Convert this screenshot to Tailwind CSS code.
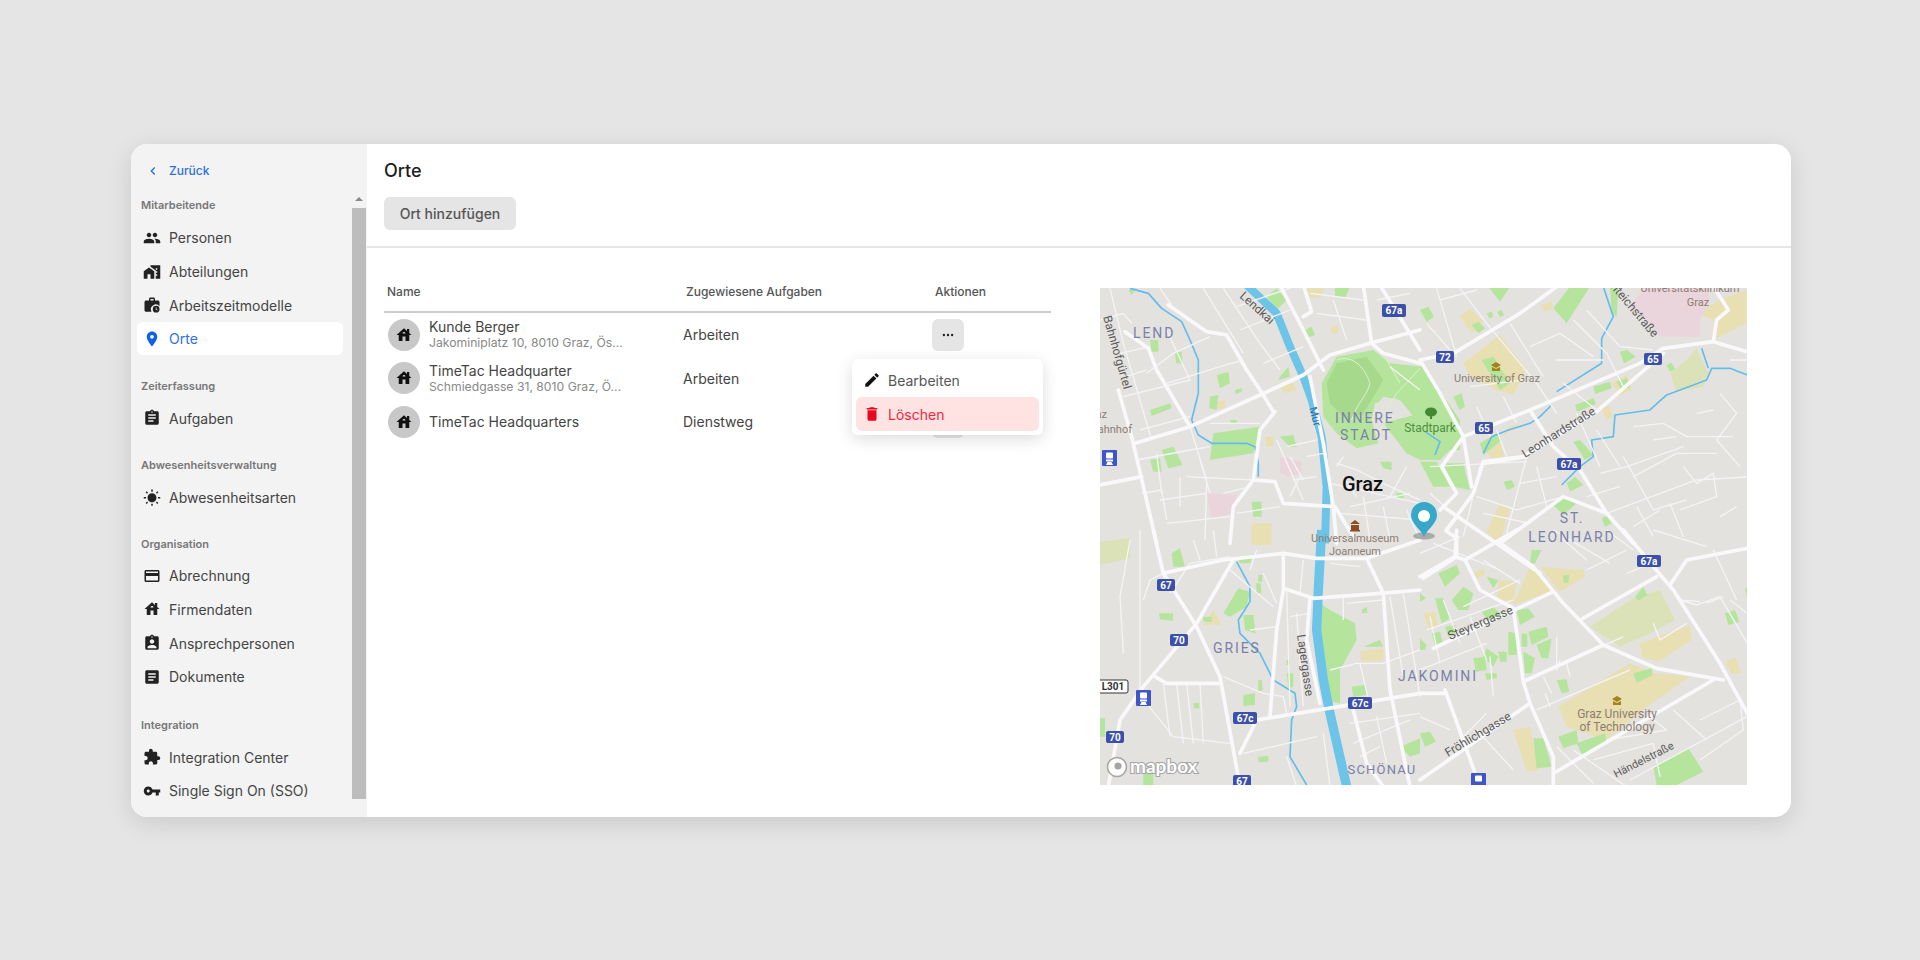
<!DOCTYPE html>
<html lang="de">
<head>
<meta charset="utf-8">
<title>Orte</title>
<script src="https://cdn.jsdelivr.net/npm/@tailwindcss/browser@4"></script>
</head>
<body class="m-0 h-[960px] w-[1920px] overflow-hidden bg-[#e5e5e5] font-['Inter',sans-serif]">
<div class="pl-[131px] pt-[144px]">
  <div class="relative flex h-[673px] w-[1660px] overflow-hidden rounded-[16px] bg-white shadow-[0_6px_24px_rgba(0,0,0,0.12)]">
    <aside class="relative h-full w-[236px] shrink-0 bg-[#f3f3f3] text-[14px] text-[#444]">
      <a class="mt-[10px] flex h-[34px] items-center gap-[8px] pl-[14px] text-[#2f6fe0]">
        <svg class="h-[16px] w-[16px]" viewBox="0 0 24 24" fill="#1f6fe5"><path d="M15.41 7.41L14 6l-6 6 6 6 1.41-1.41L10.83 12z"/></svg>
        <span class="text-[12px] font-medium">Zurück</span>
      </a>
      <div class="mt-[9px] pl-[10px] text-[11px] font-semibold leading-[16px] text-[#777]">Mitarbeitende</div>
      <nav class="mt-[8px]">
        <div class="flex h-[33.7px] items-center gap-[8px] pl-[12px]"><svg class="h-[18px] w-[18px]" viewBox="0 0 24 24" fill="#222"><path d="M16 11c1.66 0 2.99-1.34 2.99-3S17.66 5 16 5c-1.66 0-3 1.34-3 3s1.34 3 3 3zm-8 0c1.66 0 2.99-1.34 2.99-3S9.66 5 8 5C6.34 5 5 6.34 5 8s1.34 3 3 3zm0 2c-2.33 0-7 1.17-7 3.5V19h14v-2.5c0-2.33-4.67-3.5-7-3.5zm8 0c-.29 0-.62.02-.97.05 1.16.84 1.97 1.97 1.97 3.45V19h6v-2.5c0-2.33-4.67-3.5-7-3.5z"/></svg>Personen</div>
        <div class="flex h-[33.7px] items-center gap-[8px] pl-[12px]"><svg class="h-[18px] w-[18px]" viewBox="0 0 24 24" fill="#222"><path d="M1 11v10h5v-6h4v6h5V11L8 6z"/><path d="M10 3v1.97l7 5V11h2v2h-2v2h2v2h-2v4h6V3H10zm9 6h-2V7h2v2z"/></svg>Abteilungen</div>
        <div class="flex h-[33.7px] items-center gap-[8px] pl-[12px]"><svg class="h-[18px] w-[18px]" viewBox="0 0 24 24" fill="#222"><path d="M20 6h-4V4c0-1.1-.9-2-2-2h-4c-1.1 0-2 .9-2 2v2H4c-1.1 0-2 .9-2 2v11c0 1.1.9 2 2 2h7.4A6.5 6.5 0 0 1 22 13.6V8c0-1.1-.9-2-2-2zm-6 0h-4V4h4v2z"/><path d="M17.5 13a4.5 4.5 0 1 0 0 9 4.5 4.5 0 0 0 0-9zm1.6 6.4-2.1-1.3V15.2h1v2.4l1.6 1-.5.8z"/></svg>Arbeitszeitmodelle</div>
        <div class="ml-[6px] mr-[24px] flex h-[33px] items-center gap-[8px] rounded-[6px] bg-white pl-[6px] text-[#2f6fe0]"><svg class="h-[18px] w-[18px]" viewBox="0 0 24 24" fill="#0f62e0"><path d="M12 2C8.13 2 5 5.13 5 9c0 5.25 7 13 7 13s7-7.75 7-13c0-3.87-3.13-7-7-7zm0 9.5c-1.38 0-2.5-1.12-2.5-2.5s1.12-2.5 2.5-2.5 2.5 1.12 2.5 2.5-1.12 2.5-2.5 2.5z"/></svg>Orte</div>
      </nav>
      <div class="mt-[23px] pl-[10px] text-[11px] font-semibold leading-[16px] text-[#777]">Zeiterfassung</div>
      <nav class="mt-[7.5px]">
        <div class="flex h-[33.7px] items-center gap-[8px] pl-[12px]"><svg class="h-[18px] w-[18px]" viewBox="0 0 24 24" fill="#222"><path d="M19 3h-4.18C14.4 1.84 13.3 1 12 1c-1.3 0-2.4.84-2.82 2H5c-1.1 0-2 .9-2 2v14c0 1.1.9 2 2 2h14c1.1 0 2-.9 2-2V5c0-1.1-.9-2-2-2zm-7 0c.55 0 1 .45 1 1s-.45 1-1 1-1-.45-1-1 .45-1 1-1zm2 14H7v-2h7v2zm3-4H7v-2h10v2zm0-4H7V7h10v2z"/></svg>Aufgaben</div>
      </nav>
      <div class="mt-[22px] pl-[10px] text-[11px] font-semibold leading-[16px] text-[#777]">Abwesenheitsverwaltung</div>
      <nav class="mt-[7.5px]">
        <div class="flex h-[33.7px] items-center gap-[8px] pl-[12px]"><svg class="h-[18px] w-[18px]" viewBox="0 0 24 24" fill="#222"><path d="M6.76 4.84l-1.8-1.79-1.41 1.41 1.79 1.79 1.42-1.41zM4 10.5H1v2h3v-2zm9-9.95h-2V3.5h2V.55zm7.45 3.91l-1.41-1.41-1.79 1.79 1.41 1.41 1.79-1.79zm-3.21 13.7l1.79 1.8 1.41-1.41-1.8-1.79-1.4 1.4zM20 10.5v2h3v-2h-3zm-8-5c-3.31 0-6 2.69-6 6s2.69 6 6 6 6-2.69 6-6-2.69-6-6-6zm-1 16.95h2V19.5h-2v2.95zm-7.45-3.91l1.41 1.41 1.79-1.8-1.41-1.41-1.79 1.8z"/></svg>Abwesenheitsarten</div>
      </nav>
      <div class="mt-[21.5px] pl-[10px] text-[11px] font-semibold leading-[16px] text-[#777]">Organisation</div>
      <nav class="mt-[7px]">
        <div class="flex h-[33.7px] items-center gap-[8px] pl-[12px]"><svg class="h-[18px] w-[18px]" viewBox="0 0 24 24" fill="#222"><path d="M20 4H4c-1.11 0-1.99.89-1.99 2L2 18c0 1.11.89 2 2 2h16c1.11 0 2-.89 2-2V6c0-1.11-.89-2-2-2zm0 14H4v-6h16v6zm0-10H4V6h16v2z"/></svg>Abrechnung</div>
        <div class="flex h-[33.7px] items-center gap-[8px] pl-[12px]"><svg class="h-[18px] w-[18px]" viewBox="0 0 24 24" fill="#222"><path d="M19 9.3V4h-3v2.6L12 3 2 12h3v8h5v-6h4v6h5v-8h3l-3-2.7zm-9 .7c0-1.1.9-2 2-2s2 .9 2 2h-4z"/></svg>Firmendaten</div>
        <div class="flex h-[33.7px] items-center gap-[8px] pl-[12px]"><svg class="h-[18px] w-[18px]" viewBox="0 0 24 24" fill="#222"><path d="M19 3h-4.18C14.4 1.84 13.3 1 12 1c-1.3 0-2.4.84-2.82 2H5c-1.1 0-2 .9-2 2v14c0 1.1.9 2 2 2h14c1.1 0 2-.9 2-2V5c0-1.1-.9-2-2-2zm-7 0c.55 0 1 .45 1 1s-.45 1-1 1-1-.45-1-1 .45-1 1-1zm0 4c1.66 0 3 1.34 3 3s-1.34 3-3 3-3-1.34-3-3 1.34-3 3-3zm6 12H6v-1.4c0-2 4-3.1 6-3.1s6 1.1 6 3.1V19z"/></svg>Ansprechpersonen</div>
        <div class="flex h-[33.7px] items-center gap-[8px] pl-[12px]"><svg class="h-[18px] w-[18px]" viewBox="0 0 24 24" fill="#222"><path d="M19 3H5c-1.1 0-2 .9-2 2v14c0 1.1.9 2 2 2h14c1.1 0 2-.9 2-2V5c0-1.1-.9-2-2-2zm-5 14H7v-2h7v2zm3-4H7v-2h10v2zm0-4H7V7h10v2z"/></svg>Dokumente</div>
      </nav>
      <div class="mt-[23.5px] pl-[10px] text-[11px] font-semibold leading-[16px] text-[#777]">Integration</div>
      <nav class="mt-[7px]">
        <div class="flex h-[33.7px] items-center gap-[8px] pl-[12px]"><svg class="h-[18px] w-[18px]" viewBox="0 0 24 24" fill="#222"><path d="M20.5 11H19V7c0-1.1-.9-2-2-2h-4V3.5C13 2.12 11.88 1 10.5 1S8 2.12 8 3.5V5H4c-1.1 0-1.99.9-1.99 2v3.8H3.5c1.49 0 2.7 1.21 2.7 2.7s-1.21 2.7-2.7 2.7H2V20c0 1.1.9 2 2 2h3.8v-1.5c0-1.49 1.21-2.7 2.7-2.7 1.49 0 2.7 1.21 2.7 2.7V22H17c1.1 0 2-.9 2-2v-4h1.5c1.38 0 2.5-1.12 2.5-2.5S21.88 11 20.5 11z"/></svg>Integration Center</div>
        <div class="flex h-[33.7px] items-center gap-[8px] pl-[12px]"><svg class="h-[18px] w-[18px]" viewBox="0 0 24 24" fill="#222"><path d="M12.65 10C11.83 7.67 9.61 6 7 6c-3.31 0-6 2.69-6 6s2.69 6 6 6c2.61 0 4.83-1.67 5.65-4H17v4h4v-4h2v-4H12.65zM7 14c-1.1 0-2-.9-2-2s.9-2 2-2 2 .9 2 2-.9 2-2 2z"/></svg>Single Sign On (SSO)</div>
      </nav>
      <div class="absolute bottom-0 right-[1px] top-[46px] w-[14px] bg-[#f3f3f3]">
        <svg class="mx-auto mt-[7px] h-[4px] w-[8px]" viewBox="0 0 8 4" fill="#8a8a8a"><path d="M4 0l4 4H0z"/></svg>
        <div class="absolute bottom-[18px] left-0 right-0 top-[18px] bg-[#bdbdbd]"></div>
      </div>
    </aside>

    <main class="flex min-w-0 flex-1 flex-col">
      <header class="h-[102px] shrink-0 px-[17px]">
        <h1 class="pt-[15px] text-[18px] font-medium leading-[24px] text-[#1d1d1d]">Orte</h1>
        <button class="mt-[14px] flex h-[33px] w-[132px] items-center justify-center rounded-[6px] bg-[#e5e5e5] text-[14px] font-medium text-[#555]">Ort hinzufügen</button>
      </header>
      <div class="h-[2px] shrink-0 bg-[#e6e6e6]"></div>
      <div class="relative flex flex-1 items-start pl-[17px]">
        <section class="w-[667px] shrink-0 pt-[23px]">
          <div class="grid h-[42px] grid-cols-[299px_249px_1fr] items-center border-b-2 border-[#cccccc] pt-[1px] text-[12px] font-medium text-[#555]">
            <div class="pl-[3px]">Name</div>
            <div class="pl-[3px]">Zugewiesene Aufgaben</div>
            <div class="pl-[3px]">Aktionen</div>
          </div>
          <div class="grid h-[43.5px] grid-cols-[299px_249px_1fr] items-center text-[14px] text-[#444]">
            <div class="flex items-center gap-[9px] pl-[4px]">
              <span class="flex h-[32px] w-[32px] items-center justify-center rounded-full bg-[#c8c8c8]"><svg class="h-[18px] w-[18px]" viewBox="0 0 24 24" fill="#111"><path d="M19 9.3V4h-3v2.6L12 3 2 12h3v8h5v-6h4v6h5v-8h3l-3-2.7zm-9 .7c0-1.1.9-2 2-2s2 .9 2 2h-4z"/></svg></span>
              <div class="leading-[17px]"><div>Kunde Berger</div><div class="text-[12.2px] leading-[16px] text-[#888]">Jakominiplatz 10, 8010 Graz, Ös...</div></div>
            </div>
            <div>Arbeiten</div>
            <div><button class="flex h-[32px] w-[32px] items-center justify-center rounded-[6px] bg-[#e5e5e5]"><svg class="h-[18px] w-[18px]" viewBox="0 0 24 24" fill="#222"><circle cx="6.5" cy="12" r="1.6"/><circle cx="12" cy="12" r="1.6"/><circle cx="17.5" cy="12" r="1.6"/></svg></button></div>
          </div>
          <div class="grid h-[43.5px] grid-cols-[299px_249px_1fr] items-center text-[14px] text-[#444]">
            <div class="flex items-center gap-[9px] pl-[4px]">
              <span class="flex h-[32px] w-[32px] items-center justify-center rounded-full bg-[#c8c8c8]"><svg class="h-[18px] w-[18px]" viewBox="0 0 24 24" fill="#111"><path d="M19 9.3V4h-3v2.6L12 3 2 12h3v8h5v-6h4v6h5v-8h3l-3-2.7zm-9 .7c0-1.1.9-2 2-2s2 .9 2 2h-4z"/></svg></span>
              <div class="leading-[17px]"><div>TimeTac Headquarter</div><div class="text-[12.2px] leading-[16px] text-[#888]">Schmiedgasse 31, 8010 Graz, Ö...</div></div>
            </div>
            <div>Arbeiten</div>
            <div></div>
          </div>
          <div class="grid h-[43px] grid-cols-[299px_249px_1fr] items-center text-[14px] text-[#444]">
            <div class="flex items-center gap-[9px] pl-[4px]">
              <span class="flex h-[32px] w-[32px] items-center justify-center rounded-full bg-[#c8c8c8]"><svg class="h-[18px] w-[18px]" viewBox="0 0 24 24" fill="#111"><path d="M19 9.3V4h-3v2.6L12 3 2 12h3v8h5v-6h4v6h5v-8h3l-3-2.7zm-9 .7c0-1.1.9-2 2-2s2 .9 2 2h-4z"/></svg></span>
              <div>TimeTac Headquarters</div>
            </div>
            <div>Dienstweg</div>
            <div><button class="block h-[32px] w-[32px] rounded-[6px] bg-[#e5e5e5]"></button></div>
          </div>
        </section>

        <div class="ml-[49px] mt-[40px] h-[497px] w-[647px] shrink-0 overflow-hidden">
          <svg class="block h-[497px] w-[647px] font-['Roboto',sans-serif]" viewBox="0 0 647 497">
            <defs><clipPath id="mapclip"><rect width="647" height="497"/></clipPath></defs>
            <g clip-path="url(#mapclip)">
            <rect width="647" height="497" fill="#e4e2df"/>

            <!-- sand -->
            <g fill="#e8dfb3">
              <g transform="translate(-10 -8) scale(.3333)"><path d="M645 25H705L690 55 660 52z M720 145 745 135V160H725z M570 320 610 308 618 330 585 340z M380 365 405 360V385H385z M525 470H550L552 498 530 500z M485 730H545L540 790H485z"/></g>
              <g transform="translate(320 -8) scale(.3333)"><path d="M120 110 150 85 190 125 155 160z M130 250 240 165 320 265 280 345 230 330 150 290z M265 440 300 430 250 470z M575 310 620 285 635 330 600 345z M545 385 565 375 580 410 560 420z M175 490 240 480 255 540H220z M200 755 240 670 270 685 240 790z M360 75 395 65 400 85 375 95z M830 100 900 60 980 30V130L890 175 880 120z"/></g>
              <g transform="translate(-10 242) scale(.3333)"><path d="M340 285 370 240 395 285z M810 365 880 355V390L815 395z M485 0H545V45H485z"/></g>
              <g transform="translate(320 242) scale(.3333)"><path d="M280 225 330 110 410 180z M360 110 490 120 495 140 420 185z M235 150 290 155 280 220 232 205z M10 250 45 245 55 290 25 300z M195 0H250L225 30z M160 130 190 115 195 135 170 145z M660 340 810 285 815 330 715 395 665 380z M415 530 630 400 700 430 810 440 680 530 560 630 440 590z M280 600 330 590 355 720 320 725z M915 400 945 380 965 430 935 430z"/></g>
            </g>
            <!-- sage -->
            <g fill="#dbe2b8">
              <g transform="translate(320 -8) scale(.3333)"><path d="M750 280 800 240 830 205 865 280 850 320 770 335z"/></g>
              <g transform="translate(-10 242) scale(.3333)"><path d="M30 35 118 25 122 85 30 105z"/></g>
              <g transform="translate(320 242) scale(.3333)"><path d="M510 290 640 205 720 180 765 270 690 310 600 350z"/></g>
            </g>
            <!-- pink -->
            <g fill="#ebd5dc">
              <g transform="translate(-10 -8) scale(.3333)"><path d="M350 640 440 645 430 700 365 715z M570 530 635 545V580L590 590 570 575z"/></g>
              <g transform="translate(320 -8) scale(.3333)"><path d="M630 80 680 15H860L870 60 840 120V170H720L690 130z"/></g>
            </g>
            <!-- parks -->
            <g fill="#b5e49c">
              <g transform="translate(200 32) scale(.3333)"><path d="M65 190 110 110 220 90 270 130 370 140 480 300V390H360L350 300 300 240 250 230 225 260 215 300 235 370 170 385 110 340 70 290z"/></g>
              <g transform="translate(-10 -8) scale(.3333)"><path d="M530 50 560 25 590 60 560 90z M645 150 665 140 675 165 655 172z M380 285 415 275 420 310 390 325z M255 215H275L278 250H258z M180 180H205V215H185z M180 390 240 370 245 385 185 408z M360 350 385 345 380 390 358 385z M370 460 510 440 490 520 360 540z M215 510 250 500 278 555 235 565z M180 540 210 535 215 575H190z M570 290 595 260 600 290 565 300z M570 470 610 465 620 500H600z M435 330 455 325V335L438 342z M735 20H780L765 55 735 50z M485 665H515V710H490z M870 545H905V570L880 565z M115 30 140 25 125 45z M420 420H440V432H425z M918 640H945L940 655H920z M880 430 990 400V540L950 520z"/></g>
              <g transform="translate(320 -8) scale(.3333)"><path d="M0 400 60 400 130 470 60 540H0z M70 550H130L150 630 100 620z M0 545H50L90 620 40 620z M205 20H270L240 65z M0 90 25 80 42 110 20 125z M400 85 450 20H510L440 130z M155 135 175 125 195 145 175 160z M200 100 215 95 220 110 208 115z M232 95 245 90 252 105 240 112z M100 350 125 340 135 380 118 390z M600 215 620 210 648 230 612 250z M740 255 755 248 765 268 750 275z M520 320 570 305 575 325 525 342z M465 375 520 355 528 372 472 395z M590 305 620 295 632 320 605 332z M460 485 480 480 520 525 495 540z M250 605 275 600 285 620 262 630z M395 670 430 650 470 670 430 705z M545 715 560 708 575 730 555 740z M440 610 465 590 490 615 450 635z M180 490 230 460 245 480 190 525z M185 240 220 230 270 310 240 330z M570 20H595L590 110 575 100z"/></g>
              <g transform="translate(-10 242) scale(.3333)"><path d="M245 70 270 55 285 110H250z M207 250H250L248 272 210 268z M400 250 445 175 480 185 470 230 420 260z M460 255H490L497 310 465 300z M340 260H365V275H340z M445 85H485L480 100H450z M505 135H518L516 155H505z M498 160H512L514 190H500z M690 220 720 240 795 280 800 330 750 420 750 520 700 510 690 350z M820 350 870 330 880 350z M815 240 830 230 832 248 817 250z M460 495 495 490V525L460 528z M505 450H515L518 480 505 485z M590 390H600V405H590z M590 430H610V470L595 475z M785 470 825 465 830 495 790 500z M310 520 328 518V535H312z M505 680 535 678V695L505 697z M930 650 990 625V670L960 680z M160 730H190V765H160z M30 565H45V620H30z"/></g>
              <g transform="translate(320 242) scale(.3333)"><path d="M55 130 110 105 120 130 75 170z M95 210 130 170 160 190 145 240H115z M200 140 235 150 220 175z M185 245 220 230 245 255 205 275z M45 205H70L90 265 65 280z M35 310 60 305 68 335 45 345z M75 290 105 285 110 315 85 320z M290 240 325 235 345 260 300 285z M200 355 235 380 220 410 190 380z M160 385 195 380 200 420 168 425z M235 365H260V395H240z M265 305 290 310V375H265z M305 310 322 312V350H305z M325 305 380 290 385 320 335 345z M350 345 395 325 385 385H365z M310 365 345 385 335 430H315z M410 450 440 448 448 485 425 490z M415 620 470 600 475 640 430 655z M470 640 555 610 560 640 490 680z M640 430 695 415 698 435 650 458z M335 60H365L345 100H330z M700 710 805 655 850 725 770 765H710z M0 610 30 605 48 635 15 650z M0 325 20 345 15 360H0z M915 250 945 240 958 275 925 285z M340 625H370L395 710 350 715z M975 175H982V210z M645 200 670 170 682 195 655 212z M430 135H448L445 158H430z M0 190 18 205 0 215z M195 430H230V445L200 450z"/></g>
            </g>
            <!-- hill shading and paths -->
            <g transform="translate(200 32) scale(.3333)">
              <path d="M80 190 110 130 200 110 250 180 220 230 190 280 140 300 90 250z" fill="#a6d98c"/>
              <path d="M225 250 290 235 250 290 240 340 215 300z" fill="#e4e2df"/>
              <path d="M110 120C150 105 190 130 210 190 200 230 170 250 155 300M360 145 290 220 260 270 250 330M260 120 300 190" fill="none" stroke="#dff0d2" stroke-width="3"/>
            </g>

            <!-- streams -->
            <g fill="none" stroke="#62bdec" stroke-width="5" stroke-linejoin="round">
              <g transform="translate(-10 -8) scale(.3333)"><path d="M120 25 175 40 215 85 275 125 300 180 325 240V340L305 420 325 465 365 490H470L495 500 505 550V590"/></g>
              <g transform="translate(320 -8) scale(.3333)"><path d="M550 20 580 110 545 175V250L410 335M395 375 360 410 330 430 265 450 215 470 190 520M982 285 930 265H875L860 300 780 330 740 345 690 390 585 405 580 470 515 480 520 530 480 560 425 615M845 205 865 265M15 455 60 485 45 525"/></g>
              <g transform="translate(-10 242) scale(.3333)"><path d="M440 95 480 170V215L445 270 450 310 510 370 550 450 615 490 620 530 605 570 600 680 650 765"/></g>
            </g>
            <!-- river Mur -->
            <g fill="none" stroke="#6cc4e8" stroke-linejoin="round" stroke-linecap="butt">
              <g transform="translate(-10 -8) scale(.3333)"><path d="M470 15 560 100 600 200 640 290 665 360 695 470 710 620 705 790" stroke-width="24"/></g>
              <g transform="translate(-10 242) scale(.3333)"><path d="M695 0 685 180 680 300 700 450 720 550 770 770" stroke-width="28"/></g>
            </g>

            <!-- minor roads -->
            <g fill="none" stroke="#f4f4f7" stroke-width="4" stroke-linejoin="round">
              <g transform="translate(-10 -8) scale(.3333)"><path d="M60 25 100 190 185 480M210 25 245 75M30 120 100 100 125 130M100 350 180 330 300 300 230 150M170 280 250 220 360 170M230 310 390 260 460 240M340 25 460 220M400 25 510 190 570 270M450 150 600 90M520 250 640 200M140 540 300 510 360 500M300 440 350 600 345 780M155 640 215 630 230 720M200 520 215 640M270 590 270 680M290 590 490 600M210 660 350 640M440 700 570 680M230 730 420 710M590 500 680 480M610 600 680 590M600 530 640 600M600 650 630 590M660 40 820 60M680 100 830 120M730 60 770 180M860 60 960 40M900 260 990 330M740 550 800 570 900 620 990 660M720 610 990 670M780 680 960 640M760 530 740 560M820 650 840 780M880 680 900 780M440 80 640 10M360 430 510 430M330 540 360 640M560 480 640 660M650 530 700 520M400 640 480 620M90 220 180 200M110 290 170 270M150 450 300 410M750 700 990 720M760 590 800 650M950 560 900 650M950 690 990 780"/></g>
              <g transform="translate(320 -8) scale(.3333)"><path d="M120 25 200 130 350 310 410 400M50 25 110 230M270 130 370 290M460 120 560 220 610 320M500 90 600 200 700 210M410 240 550 240M330 200 420 160 520 230M150 320 310 300M170 380 210 470M250 350 290 430M430 310 530 390M470 400 540 560M530 450 600 560M540 580 620 560 790 500M610 530 700 690 800 660M560 700 830 600 1000 590M640 590 770 520 890 520M900 340 950 400 890 480 960 560M790 560 830 610 880 580 890 650 780 690M700 480 770 470M830 400 880 390M640 440 730 430 800 470 940 470M650 680 700 770M750 670 790 770M900 710 950 680M30 560 320 545M170 650 290 690 430 650M320 530 260 760M30 640 120 720M930 240 982 240M180 560 130 770M20 130 90 210M60 60 170 30M230 450 260 530M350 560 380 680M300 610 410 590M500 650 600 620M190 700 330 730M640 740 720 690"/></g>
              <g transform="translate(-10 242) scale(.3333)"><path d="M150 0V500M120 30 90 200 100 370M160 210 180 150 220 130M240 190 300 100M310 30 330 90M370 0 380 80M220 460 240 620M260 460 280 640M290 460 310 640M330 460 340 640M400 440 520 490 580 500 590 550M170 520 250 620 420 640M420 120 550 230M480 300 560 290M600 260 660 250M590 180 600 530M620 250 640 530M720 100 810 110M760 200V270M720 420 800 400H880L990 360M810 400 840 530M770 220 880 210M780 580 990 550M790 640 960 570M810 680 870 650M860 560 890 700M900 200 940 440M940 190 990 500M460 670 680 620M590 680 620 770M700 610 720 770M300 100 420 80M520 130 560 220M480 120 500 60M640 90 630 190"/></g>
              <g transform="translate(320 242) scale(.3333)"><path d="M40 40 240 120M0 70 120 20M400 0 570 100M420 20 500 90M560 0 640 60M700 0 860 50M620 130 720 90M620 60 500 120M880 60 950 210M780 210 840 215M860 220 910 200M930 210 982 250M190 90 300 160M130 230 300 150M20 300 280 210M70 210 120 340M30 260 60 400M150 260 200 390M0 420 200 340M210 380 220 500M370 440 395 490M440 400 450 440M375 490 390 530M420 390 410 420V320M350 540 630 420M560 630 740 600 690 560M760 540 860 630M840 570 960 510 970 600 840 690M630 750 980 560M520 690 700 640 720 740M700 280 720 330 800 280M780 210 830 225 900 200M900 200 982 340M170 600 280 720M130 620 200 550M460 660 620 770M410 650 520 760M0 560 90 600M330 450 420 400M500 370 610 320"/></g>
            </g>

            <!-- major roads -->
            <g fill="none" stroke="#f9f9fc" stroke-width="11" stroke-linejoin="round" stroke-linecap="round">
              <g transform="translate(-10 -8) scale(.3333)"><path d="M85 330 125 470 200 790M135 490 300 440 510 345 640 285 720 225 840 190 990 150M820 15 845 190 880 220 990 250M870 15 990 210M235 75 350 155 410 165 470 270 520 345 550 395M570 15 640 150 700 270M640 110 665 95 640 15M660 290 700 490 730 680 740 790M30 615 155 590M555 395 510 450 490 600 430 680 420 790M490 600 555 605 580 670 735 680 790 770M105 155 175 205 200 270 300 440"/></g>
              <g transform="translate(320 -8) scale(.3333)"><path d="M0 240 100 220 300 100 410 20M0 240 60 340 130 470 155 620M130 470 330 390 660 250 730 205 880 185 982 215M330 390 400 500 480 570 560 700 640 790M130 470 65 560 110 640 60 690M190 545 310 530 530 395 730 220M190 545 160 640 80 750M430 650 240 790M430 650 560 700M880 185 890 120 925 90 900 50 880 20"/></g>
              <g transform="translate(-10 242) scale(.3333)"><path d="M190 0 220 130 400 90 580 70 680 85 830 85 990 30M220 130 320 290 390 440 450 770M430 90 320 280 160 470 90 570 55 770M580 70V180L560 300 540 560M580 175 670 205 870 190 990 180M830 85 880 190 900 480 960 770M500 570 990 490M500 570 450 670M660 205 650 330 690 520M195 440 230 460H385M790 540 830 700 880 770"/></g>
              <g transform="translate(320 242) scale(.3333)"><path d="M0 140 105 80 110 0M105 80 135 90 230 35 290 0M235 35 340 110 430 220 550 345 710 415 910 450M610 0 700 110 760 180 900 400 982 550M550 345 310 455M135 90 180 180 280 235 310 455 330 520 400 680V770M40 355 400 185M0 490H75M75 480 180 770M0 750 330 520M400 730 880 450M480 270 710 140M750 165 800 90 982 55"/></g>
              <g transform="translate(240 152) scale(.3333)"><path d="M350 230 318 272 350 295 350 350 250 415M310 200 600 400M430 70 560 50"/></g>
            </g>

            <!-- area labels -->
            <g fill="#7a80aa" font-size="14" letter-spacing="1.9">
              <text x="33" y="50">LEND</text>
              <text x="235" y="135">INNERE</text>
              <text x="240" y="152">STADT</text>
              <text x="113" y="365">GRIES</text>
              <text x="472" y="235" text-anchor="middle">ST.</text>
              <text x="472" y="254" text-anchor="middle">LEONHARD</text>
              <text x="338" y="393" text-anchor="middle">JAKOMINI</text>
              <text x="282" y="486" text-anchor="middle" font-size="13" letter-spacing="1.2">SCHÖNAU</text>
            </g>
            <text x="242" y="203" font-size="20" font-weight="500" fill="#111">Graz</text>
            <g fill="#5a5a5a" font-size="12">
              <text transform="translate(139 9) rotate(42)">Lendkai</text>
              <text transform="translate(3 29) rotate(74)">Bahnhofgürtel</text>
              <text transform="translate(197 347) rotate(82)">Lagergasse</text>
              <text transform="translate(425 170) rotate(-32)">Leonhardstraße</text>
              <text transform="translate(350 352) rotate(-23)">Steyrergasse</text>
              <text transform="translate(348 469) rotate(-31)">Fröhlichgasse</text>
              <text transform="translate(516 490) rotate(-27)" font-size="11">Händelstraße</text>
              <text transform="translate(553 50) rotate(50)" text-anchor="end">Hilmteichstraße</text>
            </g>
            <text transform="translate(209 120) rotate(75)" font-size="11" fill="#2a6ea8">Mur</text>
            <g fill="#8d7d72" font-size="11" text-anchor="middle">
              <text x="397" y="94">University of Graz</text>
              <text x="590" y="4">Universitätsklinikum</text>
              <text x="598" y="18">Graz</text>
              <text x="255" y="254">Universalmuseum</text>
              <text x="255" y="267">Joanneum</text>
              <text x="517" y="430" font-size="12">Graz University</text>
              <text x="517" y="443" font-size="12">of Technology</text>
              <text x="7" y="130" text-anchor="end">Graz</text>
              <text x="32" y="145" text-anchor="end">Hauptbahnhof</text>
            </g>
            <text x="330" y="144" font-size="12" text-anchor="middle" fill="#4f8f40">Stadtpark</text>
            <!-- poi icons -->
            <g fill="#3f8a33"><ellipse cx="331" cy="124" rx="6" ry="4.5"/><rect x="330" y="125" width="2" height="6"/></g>
            <g fill="#a7821a">
              <path d="M391 77 396 74 401 77 396 80z"/><path d="M392 79V83H400V79L396 81z"/>
              <path d="M512 411 517 408 522 411 517 414z"/><path d="M513 413V417H521V413L517 415z"/>
            </g>
            <g fill="#8b4c26"><path d="M250 236 255 232 260 236z"/><rect x="251" y="237" width="8" height="5"/><rect x="250" y="242" width="10" height="1.5"/></g>

            <!-- shields -->
            <g font-size="10" font-weight="700" fill="#fff" text-anchor="middle">
              <g><rect x="282" y="16" width="24" height="13" rx="2" fill="#3c4fa9"/><text x="294" y="26">67a</text></g>
              <g><rect x="336" y="63" width="18" height="12" rx="2" fill="#3c4fa9"/><text x="345" y="73">72</text></g>
              <g><rect x="544" y="65" width="18" height="12" rx="2" fill="#3c4fa9"/><text x="553" y="75">65</text></g>
              <g><rect x="375" y="134" width="18" height="12" rx="2" fill="#3c4fa9"/><text x="384" y="144">65</text></g>
              <g><rect x="457" y="170" width="24" height="12" rx="2" fill="#3c4fa9"/><text x="469" y="180">67a</text></g>
              <g><rect x="537" y="267" width="24" height="12" rx="2" fill="#3c4fa9"/><text x="549" y="277">67a</text></g>
              <g><rect x="57" y="291" width="18" height="12" rx="2" fill="#3c4fa9"/><text x="66" y="301">67</text></g>
              <g><rect x="70" y="346" width="18" height="12" rx="2" fill="#3c4fa9"/><text x="79" y="356">70</text></g>
              <g><rect x="133" y="424" width="24" height="12" rx="2" fill="#3c4fa9"/><text x="145" y="434">67c</text></g>
              <g><rect x="248" y="409" width="24" height="12" rx="2" fill="#3c4fa9"/><text x="260" y="419">67c</text></g>
              <g><rect x="6" y="443" width="18" height="12" rx="2" fill="#3c4fa9"/><text x="15" y="453">70</text></g>
              <g><rect x="133" y="487" width="18" height="12" rx="2" fill="#3c4fa9"/><text x="142" y="497">67</text></g>
              <g><rect x="-2" y="392" width="30" height="13" rx="2" fill="#fff" stroke="#333"/><text x="13" y="402" fill="#333">L301</text></g>
            </g>
            <!-- train icons -->
            <g fill="#fff">
              <rect x="2" y="162" width="15" height="16" rx="1" fill="#3f55c8"/><rect x="6" y="164.5" width="7" height="6" rx="1"/><rect x="6" y="171.5" width="7" height="2"/><path d="M6 177 7.500 174H11.500L13 177z"/>
              <rect x="36" y="402" width="15" height="16" rx="1" fill="#3f55c8"/><rect x="40" y="404.5" width="7" height="6" rx="1"/><rect x="40" y="411.5" width="7" height="2"/><path d="M40 417 41.500 414H45.500L47 417z"/>
              <rect x="371" y="485" width="15" height="14" rx="1" fill="#3f55c8"/><rect x="375" y="487.5" width="7" height="6" rx="1"/>
            </g>
            <!-- mapbox -->
            <circle cx="17" cy="479" r="9.5" fill="#fff" fill-opacity=".9" stroke="#a5a5a5" stroke-width="1.5"/>
            <circle cx="18" cy="478" r="3.5" fill="#a5a5a5"/>
            <text x="30" y="485" font-family="Lato, sans-serif" font-size="19" font-weight="700" fill="#fff" stroke="#a5a5a5" stroke-width="2.2" paint-order="stroke">mapbox</text>
            <!-- pin -->
            <ellipse cx="324" cy="248" rx="11" ry="3.5" fill="#555" fill-opacity=".4"/>
            <path d="M324 249C321 241 311 236 311 227A13 13 0 0 1 337 227C337 236 327 241 324 249Z" fill="#36a8c9"/>
            <circle cx="324" cy="228" r="6" fill="#fff"/>
            </g>
          </svg>
        </div>

        <div class="absolute left-[485px] top-[111px] w-[191px] rounded-[6px] bg-white p-[4px] text-[14px] shadow-[0_4px_16px_rgba(0,0,0,0.14)]">
          <div class="flex h-[34px] items-center gap-[7px] pl-[7px] text-[#555]"><svg class="h-[18px] w-[18px]" viewBox="0 0 24 24" fill="#111"><path d="M3 17.25V21h3.75L17.81 9.94l-3.75-3.75L3 17.25zM20.71 7.04c.39-.39.39-1.02 0-1.41l-2.34-2.34c-.39-.39-1.02-.39-1.41 0l-1.83 1.83 3.75 3.75 1.83-1.83z"/></svg>Bearbeiten</div>
          <div class="flex h-[34px] items-center gap-[7px] rounded-[6px] bg-[#ffe3e3] pl-[7px] text-[#f5263c]"><svg class="h-[18px] w-[18px]" viewBox="0 0 24 24" fill="#e8091e"><path d="M6 19c0 1.1.9 2 2 2h8c1.1 0 2-.9 2-2V7H6v12zM19 4h-3.5l-1-1h-5l-1 1H5v2h14V4z"/></svg>Löschen</div>
        </div>
      </div>
    </main>
  </div>
</div>
</body>
</html>
